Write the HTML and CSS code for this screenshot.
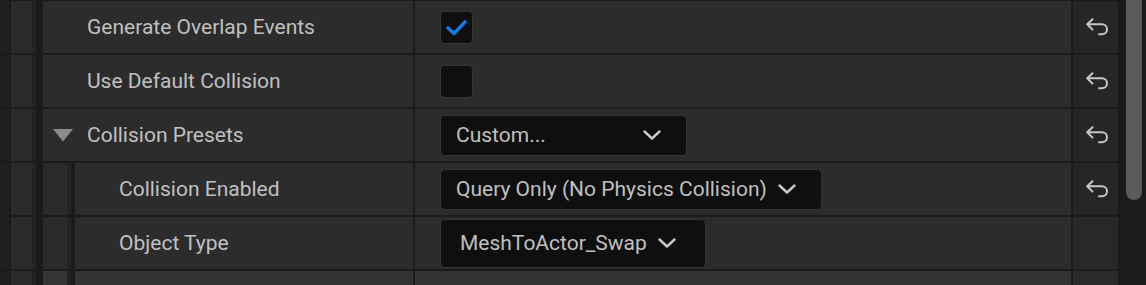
FILE: index.html
```html
<!DOCTYPE html>
<html>
<head>
<meta charset="utf-8">
<link rel="stylesheet" href="styles.css">
</head>
<body>
<div class="wrap">
  <div class="panel">
    <div class="row">
      <div class="gutter"></div>
      <div class="name"><span class="caret-space"></span><span class="label">Generate Overlap Events</span></div>
      <div class="value">
        <span class="checkbox"><svg width="24" height="20" viewBox="0 0 24 20"><polyline points="3,10 9,15.5 20,4" fill="none" stroke="#1577e0" stroke-width="3.6" stroke-linecap="round" stroke-linejoin="round"/></svg></span>
      </div>
      <div class="reset"><svg class="reset-icon" width="23" height="18" viewBox="0 0 23 18"><path d="M6.5 1.2 L1.2 6.3 L6.5 11.6 M1.2 6.3 H16 A5 5 0 0 1 16 16.3 H13" fill="none" stroke="#c6c6c6" stroke-width="2" stroke-linecap="round" stroke-linejoin="round"/></svg></div>
    </div>
    <div class="row">
      <div class="gutter"></div>
      <div class="name"><span class="caret-space"></span><span class="label">Use Default Collision</span></div>
      <div class="value">
        <span class="checkbox"></span>
      </div>
      <div class="reset"><svg class="reset-icon" width="23" height="18" viewBox="0 0 23 18"><path d="M6.5 1.2 L1.2 6.3 L6.5 11.6 M1.2 6.3 H16 A5 5 0 0 1 16 16.3 H13" fill="none" stroke="#c6c6c6" stroke-width="2" stroke-linecap="round" stroke-linejoin="round"/></svg></div>
    </div>
    <div class="row">
      <div class="gutter"></div>
      <div class="name"><span class="caret-space"><svg width="20" height="13" viewBox="0 0 20 13"><polygon points="0,0 20,0 10,12.5" fill="#8b8b8b"/></svg></span><span class="label">Collision Presets</span></div>
      <div class="value">
        <span class="combo combo-custom"><span class="combo-text">Custom...</span><svg class="chev" width="18" height="10" viewBox="0 0 18 10"><polyline points="1.5,1.5 9,8.5 16.5,1.5" fill="none" stroke="#c8c8c8" stroke-width="2.4" stroke-linecap="round" stroke-linejoin="round"/></svg></span>
      </div>
      <div class="reset"><svg class="reset-icon" width="23" height="18" viewBox="0 0 23 18"><path d="M6.5 1.2 L1.2 6.3 L6.5 11.6 M1.2 6.3 H16 A5 5 0 0 1 16 16.3 H13" fill="none" stroke="#c6c6c6" stroke-width="2" stroke-linecap="round" stroke-linejoin="round"/></svg></div>
    </div>
    <div class="row">
      <div class="gutter"></div>
      <div class="name nested"><span class="indent"></span><span class="caret-space"></span><span class="label">Collision Enabled</span></div>
      <div class="value">
        <span class="combo"><span class="combo-text">Query Only (No Physics Collision)</span><svg class="chev" width="18" height="10" viewBox="0 0 18 10"><polyline points="1.5,1.5 9,8.5 16.5,1.5" fill="none" stroke="#c8c8c8" stroke-width="2.4" stroke-linecap="round" stroke-linejoin="round"/></svg></span>
      </div>
      <div class="reset"><svg class="reset-icon" width="23" height="18" viewBox="0 0 23 18"><path d="M6.5 1.2 L1.2 6.3 L6.5 11.6 M1.2 6.3 H16 A5 5 0 0 1 16 16.3 H13" fill="none" stroke="#c6c6c6" stroke-width="2" stroke-linecap="round" stroke-linejoin="round"/></svg></div>
    </div>
    <div class="row">
      <div class="gutter"></div>
      <div class="name nested"><span class="indent"></span><span class="caret-space"></span><span class="label">Object Type</span></div>
      <div class="value">
        <span class="combo combo-tall"><span class="combo-text">MeshToActor_Swap</span><svg class="chev" width="18" height="10" viewBox="0 0 18 10"><polyline points="1.5,1.5 9,8.5 16.5,1.5" fill="none" stroke="#c8c8c8" stroke-width="2.4" stroke-linecap="round" stroke-linejoin="round"/></svg></span>
      </div>
      <div class="reset reset-plain"></div>
    </div>
    <div class="row row-next">
      <div class="gutter"></div>
      <div class="name nested"><span class="indent indent-light"></span></div>
      <div class="value"></div>
      <div class="reset reset-plain"></div>
    </div>
  </div>
  <div class="scroll"><div class="thumb"></div></div>
</div>
</body>
</html>
```

FILE: styles.css
```css
html, body {
  margin: 0;
  padding: 0;
  background: #1b1b1b;
  height: 285px;
  overflow: hidden;
}

body {
  font-family: Roboto, "Liberation Sans", sans-serif;
  font-size: 21px;
  color: #c0c0c0;
}

.wrap {
  display: flex;
  height: 285px;
  overflow: hidden;
}

.panel {
  width: 1118px;
  display: flex;
  flex-direction: column;
  gap: 2px;
  padding-top: 1px;
  background: #1b1b1b;
}

.row {
  display: grid;
  grid-template-columns: 43px 370px 658px 47px;
  height: 52px;
  flex: none;
  background: #1b1b1b;
}

.gutter {
  background: linear-gradient(to right, #1f1f1f 0 10px, #171717 10px 11px, #2a2a2a 11px 32px, #242424 32px 36px, #1b1b1b 36px 43px);
}

.name {
  display: flex;
  align-items: center;
  background: #2c2c2c;
}

.nested .indent {
  align-self: stretch;
  width: 32px;
  flex: none;
  background: linear-gradient(to right, #2a2a2a 0 24px, #242424 24px 28px, #1b1b1b 28px 32px);
}

.nested .indent-light {
  background: linear-gradient(to right, #353535 0 24px, #242424 24px 28px, #1b1b1b 28px 32px);
}

.caret-space {
  width: 20px;
  height: 13px;
  margin: 1px 14px 0 10px;
  flex: none;
  display: flex;
}

.caret-space svg {
  display: block;
}

.label {
  white-space: nowrap;
}

.value {
  margin-left: 2px;
  display: flex;
  align-items: center;
  padding-left: 25px;
  background: #2c2c2c;
}

.checkbox {
  width: 31px;
  height: 31px;
  border: 1px solid #363636;
  border-radius: 4px;
  background: #0f0f0f;
  display: flex;
  align-items: center;
  justify-content: center;
}

.checkbox svg {
  display: block;
  margin-top: 1px;
}

.combo {
  box-sizing: border-box;
  height: 41px;
  display: inline-flex;
  align-items: center;
  gap: 11px;
  padding: 0 25px 0 15px;
  background: #0f0f0f;
  border: 1px solid #343434;
  border-radius: 5px;
  white-space: nowrap;
}

.combo-custom {
  width: 247px;
}

.combo-custom .combo-text {
  flex: 1;
}

.combo-tall {
  height: 49px;
  padding: 0 29px 0 19px;
}

.chev {
  display: block;
  flex: none;
}

.reset {
  margin-left: 2px;
  display: flex;
  align-items: center;
  padding-left: 13px;
  background: #262626;
}

.reset-plain {
  background: #282828;
}

.reset-icon {
  display: block;
}

.row-next .name,
.row-next .value {
  background: #333333;
}

.row-next .reset {
  background: #2a2a2a;
}

.scroll {
  width: 28px;
  background: #1b1b1b;
}

.thumb {
  width: 16px;
  height: 200px;
  margin-left: 8px;
  background: #5a5a5a;
  border-radius: 0 0 8px 8px;
}
```
